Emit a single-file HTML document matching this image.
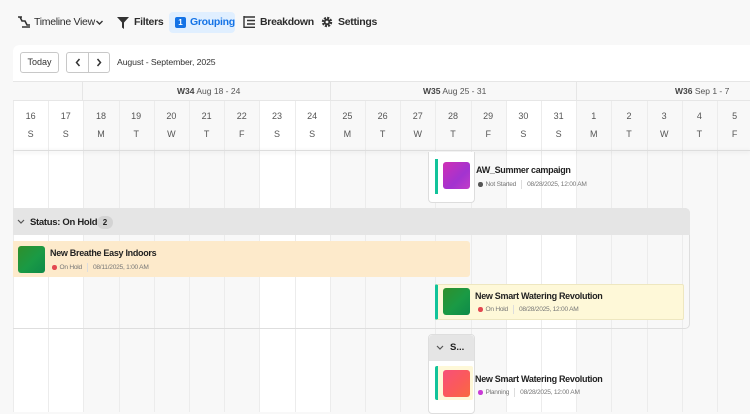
<!DOCTYPE html>
<html><head><meta charset="utf-8"><style>
*{box-sizing:border-box;margin:0;padding:0}
body{width:750px;height:412px;overflow:hidden;background:#f8f8f8;font-family:"Liberation Sans",sans-serif;position:relative;color:#222}
.abs{position:absolute}
.tl{position:absolute;top:16px;font-size:10.5px;font-weight:bold;color:#2c2c2c;letter-spacing:-0.3px;white-space:nowrap}
.ic{position:absolute}
.panel{position:absolute;left:13px;top:45px;width:737px;height:367px;background:#fff;border-top-left-radius:6px;border:1px solid #eaeaea;border-right:none;border-bottom:none;overflow:hidden}
.col{position:absolute;top:81px;height:331px;border-left:1px solid #ececec}
.dn{position:absolute;top:111px;font-size:9px;color:#555;text-align:center;width:35px}
.dl{position:absolute;top:129px;font-size:9px;color:#555;text-align:center;width:35px}
.title{font-size:9px;font-weight:bold;color:#222;letter-spacing:-0.3px;white-space:nowrap}
.meta{font-size:6.6px;color:#777;display:flex;align-items:center;gap:2px;letter-spacing:-0.25px;white-space:nowrap}
.dot{width:4.5px;height:4.5px;border-radius:50%;display:inline-block;margin-right:1px}
.sep{width:1px;height:9px;background:#ddd;margin:0 3px}
</style></head><body>

<svg class="ic" style="left:17px;top:15px" width="14" height="14" viewBox="0 0 14 14"><path d="M1 2h4M3 2l2 4h3l2 4h3M5 12h8" stroke="#333" stroke-width="1.6" fill="none"/></svg>
<div class="tl" style="left:34px;font-weight:normal">Timeline View</div>
<svg class="ic" style="left:95px;top:18px" width="9" height="9" viewBox="0 0 9 9"><path d="M1.5 3l3 3 3-3" stroke="#333" stroke-width="1.4" fill="none"/></svg>
<svg class="ic" style="left:117px;top:16px" width="12" height="13" viewBox="0 0 12 13"><path d="M0 1h12L7 6.5V13L5 11.5V6.5z" fill="#333"/></svg>
<div class="tl" style="left:134px">Filters</div>
<div class="abs" style="left:169px;top:12px;width:66px;height:21px;background:#e0efff;border-radius:4px"></div>
<div class="abs" style="left:175px;top:17px;width:11px;height:11px;background:#1473e6;color:#fff;font-size:8px;text-align:center;line-height:11px;border-radius:2px;font-weight:bold">1</div>
<div class="tl" style="left:190px;color:#1473e6">Grouping</div>
<svg class="ic" style="left:243px;top:16px" width="12" height="12" viewBox="0 0 12 12"><path d="M1 0v12M1 1h11M4 4.5h8M4 8h8M1 11.3h11" stroke="#333" stroke-width="1.4" fill="none"/></svg>
<div class="tl" style="left:260px">Breakdown</div>
<svg class="ic" style="left:321px;top:16px" width="12" height="12" viewBox="0 0 12 12"><circle cx="6" cy="6" r="4" fill="none" stroke="#333" stroke-width="2.4" stroke-dasharray="2 1.15"/><circle cx="6" cy="6" r="3.2" fill="#333"/><circle cx="6" cy="6" r="1.4" fill="#f8f8f8"/></svg>
<div class="tl" style="left:338px">Settings</div>

<div class="panel"></div>
<div id="cols"></div>
<script>
var days=[16,17,18,19,20,21,22,23,24,25,26,27,28,29,30,31,1,2,3,4,5];
var lt="SSMTWTFSSMTWTFSSMTWTF";
var h="";
for(var i=0;i<21;i++){var x=13+i*35.2;var we=(lt[i]=="S");
h+='<div class="col" style="left:'+x+'px;width:35.2px;background:'+(we?'#fff':'#f8f8f8')+'"></div>';
h+='<div class="dn" style="left:'+(x+0.1)+'px">'+days[i]+'</div><div class="dl" style="left:'+(x+0.1)+'px">'+lt[i]+'</div>';}
document.getElementById('cols').innerHTML=h;
</script>
<div class="abs" style="left:13px;top:81px;width:737px;height:20px;background:#f8f8f8;border-top:1px solid #e6e6e6;border-bottom:1px solid #e6e6e6"></div>
<div class="abs" style="left:82px;top:81px;height:20px;border-left:1px solid #e6e6e6"></div>
<div class="abs" style="left:330px;top:81px;height:20px;border-left:1px solid #e6e6e6"></div>
<div class="abs" style="left:576px;top:81px;height:20px;border-left:1px solid #e6e6e6"></div>
<div class="abs" style="left:177px;top:86px;font-size:8.5px;color:#555;white-space:nowrap"><b style="color:#444">W34</b> Aug 18 - 24</div>
<div class="abs" style="left:423px;top:86px;font-size:8.5px;color:#555;white-space:nowrap"><b style="color:#444">W35</b> Aug 25 - 31</div>
<div class="abs" style="left:675px;top:86px;font-size:8.5px;color:#555;white-space:nowrap"><b style="color:#444">W36</b> Sep 1 - 7</div>
<div class="abs" style="left:13px;top:150px;width:737px;height:1px;background:#ddd;box-shadow:0 1px 4px rgba(0,0,0,.15)"></div>
<div class="abs" style="left:13px;top:45px;width:737px;height:36px;background:#fff;border-top-left-radius:6px"></div>
<div class="abs" style="left:20px;top:52px;width:39px;height:21px;border:1px solid #c8c8c8;border-radius:3px;font-size:9px;text-align:center;line-height:19px;color:#333">Today</div>
<div class="abs" style="left:66px;top:52px;width:44px;height:21px;border:1px solid #c8c8c8;border-radius:3px"></div>
<div class="abs" style="left:88px;top:52px;width:1px;height:21px;background:#c8c8c8"></div>
<svg class="abs" style="left:74px;top:58px" width="8" height="9" viewBox="0 0 8 9"><path d="M5.5 1L2.5 4.5l3 3.5" stroke="#333" stroke-width="1.5" fill="none"/></svg>
<svg class="abs" style="left:95px;top:58px" width="8" height="9" viewBox="0 0 8 9"><path d="M2.5 1l3 3.5-3 3.5" stroke="#333" stroke-width="1.5" fill="none"/></svg>
<div class="abs" style="left:117px;top:57px;font-size:8.7px;color:#333;letter-spacing:-0.1px">August - September, 2025</div>

<div class="abs" style="left:428px;top:152px;width:47px;height:51px;border:1px solid #ddd;border-top:none;border-radius:0 0 4px 4px;background:#fff"></div>
<div class="abs" style="left:435px;top:159px;width:3px;height:35px;background:#12c39a"></div>
<div class="abs" style="left:443px;top:162px;width:27px;height:27px;border-radius:3px;background:linear-gradient(135deg,#d02fb5,#a233d0 60%,#c23cc8)"></div>
<div class="abs title" style="left:476px;top:165px">AW_Summer campaign</div>
<div class="abs meta" style="left:478px;top:180px"><span class="dot" style="background:#555"></span>Not Started<span class="sep"></span>08/28/2025, 12:00 AM</div>

<div class="abs" style="left:13px;top:208px;width:677px;height:121px;border:1px solid #dedede;border-left:none;border-radius:0 5px 5px 0"></div>
<div class="abs" style="left:13px;top:208px;width:677px;height:27px;background:#e5e5e5;border-radius:0 5px 0 0"></div>
<svg class="abs" style="left:17px;top:219px" width="8" height="6" viewBox="0 0 8 6"><path d="M1 1l3 3 3-3" stroke="#555" stroke-width="1.2" fill="none"/></svg>
<div class="abs" style="left:30px;top:217px;font-size:9.5px;font-weight:bold;color:#222;letter-spacing:-0.3px">Status: On Hold</div>
<div class="abs" style="left:97px;top:216px;width:16px;height:13px;border-radius:7px;background:#d3d3d3;font-size:8px;font-weight:bold;text-align:center;line-height:13px">2</div>

<div class="abs" style="left:13px;top:241px;width:457px;height:36px;background:#fdeacb;border-radius:0 3px 3px 0"></div>
<div class="abs" style="left:18px;top:246px;width:27px;height:27px;border-radius:3px;background:linear-gradient(135deg,#2f8f2b,#1a9a45 55%,#0e8a4a)"></div>
<div class="abs title" style="left:50px;top:248px">New Breathe Easy Indoors</div>
<div class="abs meta" style="left:52px;top:263px"><span class="dot" style="background:#e34850"></span>On Hold<span class="sep"></span>08/11/2025, 1:00 AM</div>

<div class="abs" style="left:435px;top:284px;width:249px;height:36px;background:#fef8d8;border:1px solid #eee7c0;border-left:3px solid #12c39a;border-radius:2px"></div>
<div class="abs" style="left:443px;top:288px;width:27px;height:27px;border-radius:3px;background:linear-gradient(135deg,#2f8f2b,#1a9a45 55%,#0e8a4a)"></div>
<div class="abs title" style="left:475px;top:291px">New Smart Watering Revolution</div>
<div class="abs meta" style="left:478px;top:305px"><span class="dot" style="background:#e34850"></span>On Hold<span class="sep"></span>08/28/2025, 12:00 AM</div>

<div class="abs" style="left:428px;top:334px;width:47px;height:80px;border:1px solid #dedede;border-radius:4px;background:#fff"></div>
<div class="abs" style="left:429px;top:335px;width:45px;height:26px;background:#e5e5e5;border-radius:4px 4px 0 0"></div>
<svg class="abs" style="left:436px;top:345px" width="8" height="6" viewBox="0 0 8 6"><path d="M1 1l3 3 3-3" stroke="#555" stroke-width="1.2" fill="none"/></svg>
<div class="abs" style="left:450px;top:342px;font-size:9.5px;font-weight:bold">S...</div>
<div class="abs" style="left:435px;top:366px;width:38px;height:34px;background:#fef8d8;border-left:3px solid #12c39a;border-radius:2px"></div>
<div class="abs" style="left:443px;top:370px;width:27px;height:27px;border-radius:3px;background:linear-gradient(135deg,#f7507a,#fb5a5a 55%,#f86a40)"></div>
<div class="abs title" style="left:475px;top:374px">New Smart Watering Revolution</div>
<div class="abs meta" style="left:478px;top:388px"><span class="dot" style="background:#c93bd6"></span>Planning<span class="sep"></span>08/28/2025, 12:00 AM</div>
</body></html>
